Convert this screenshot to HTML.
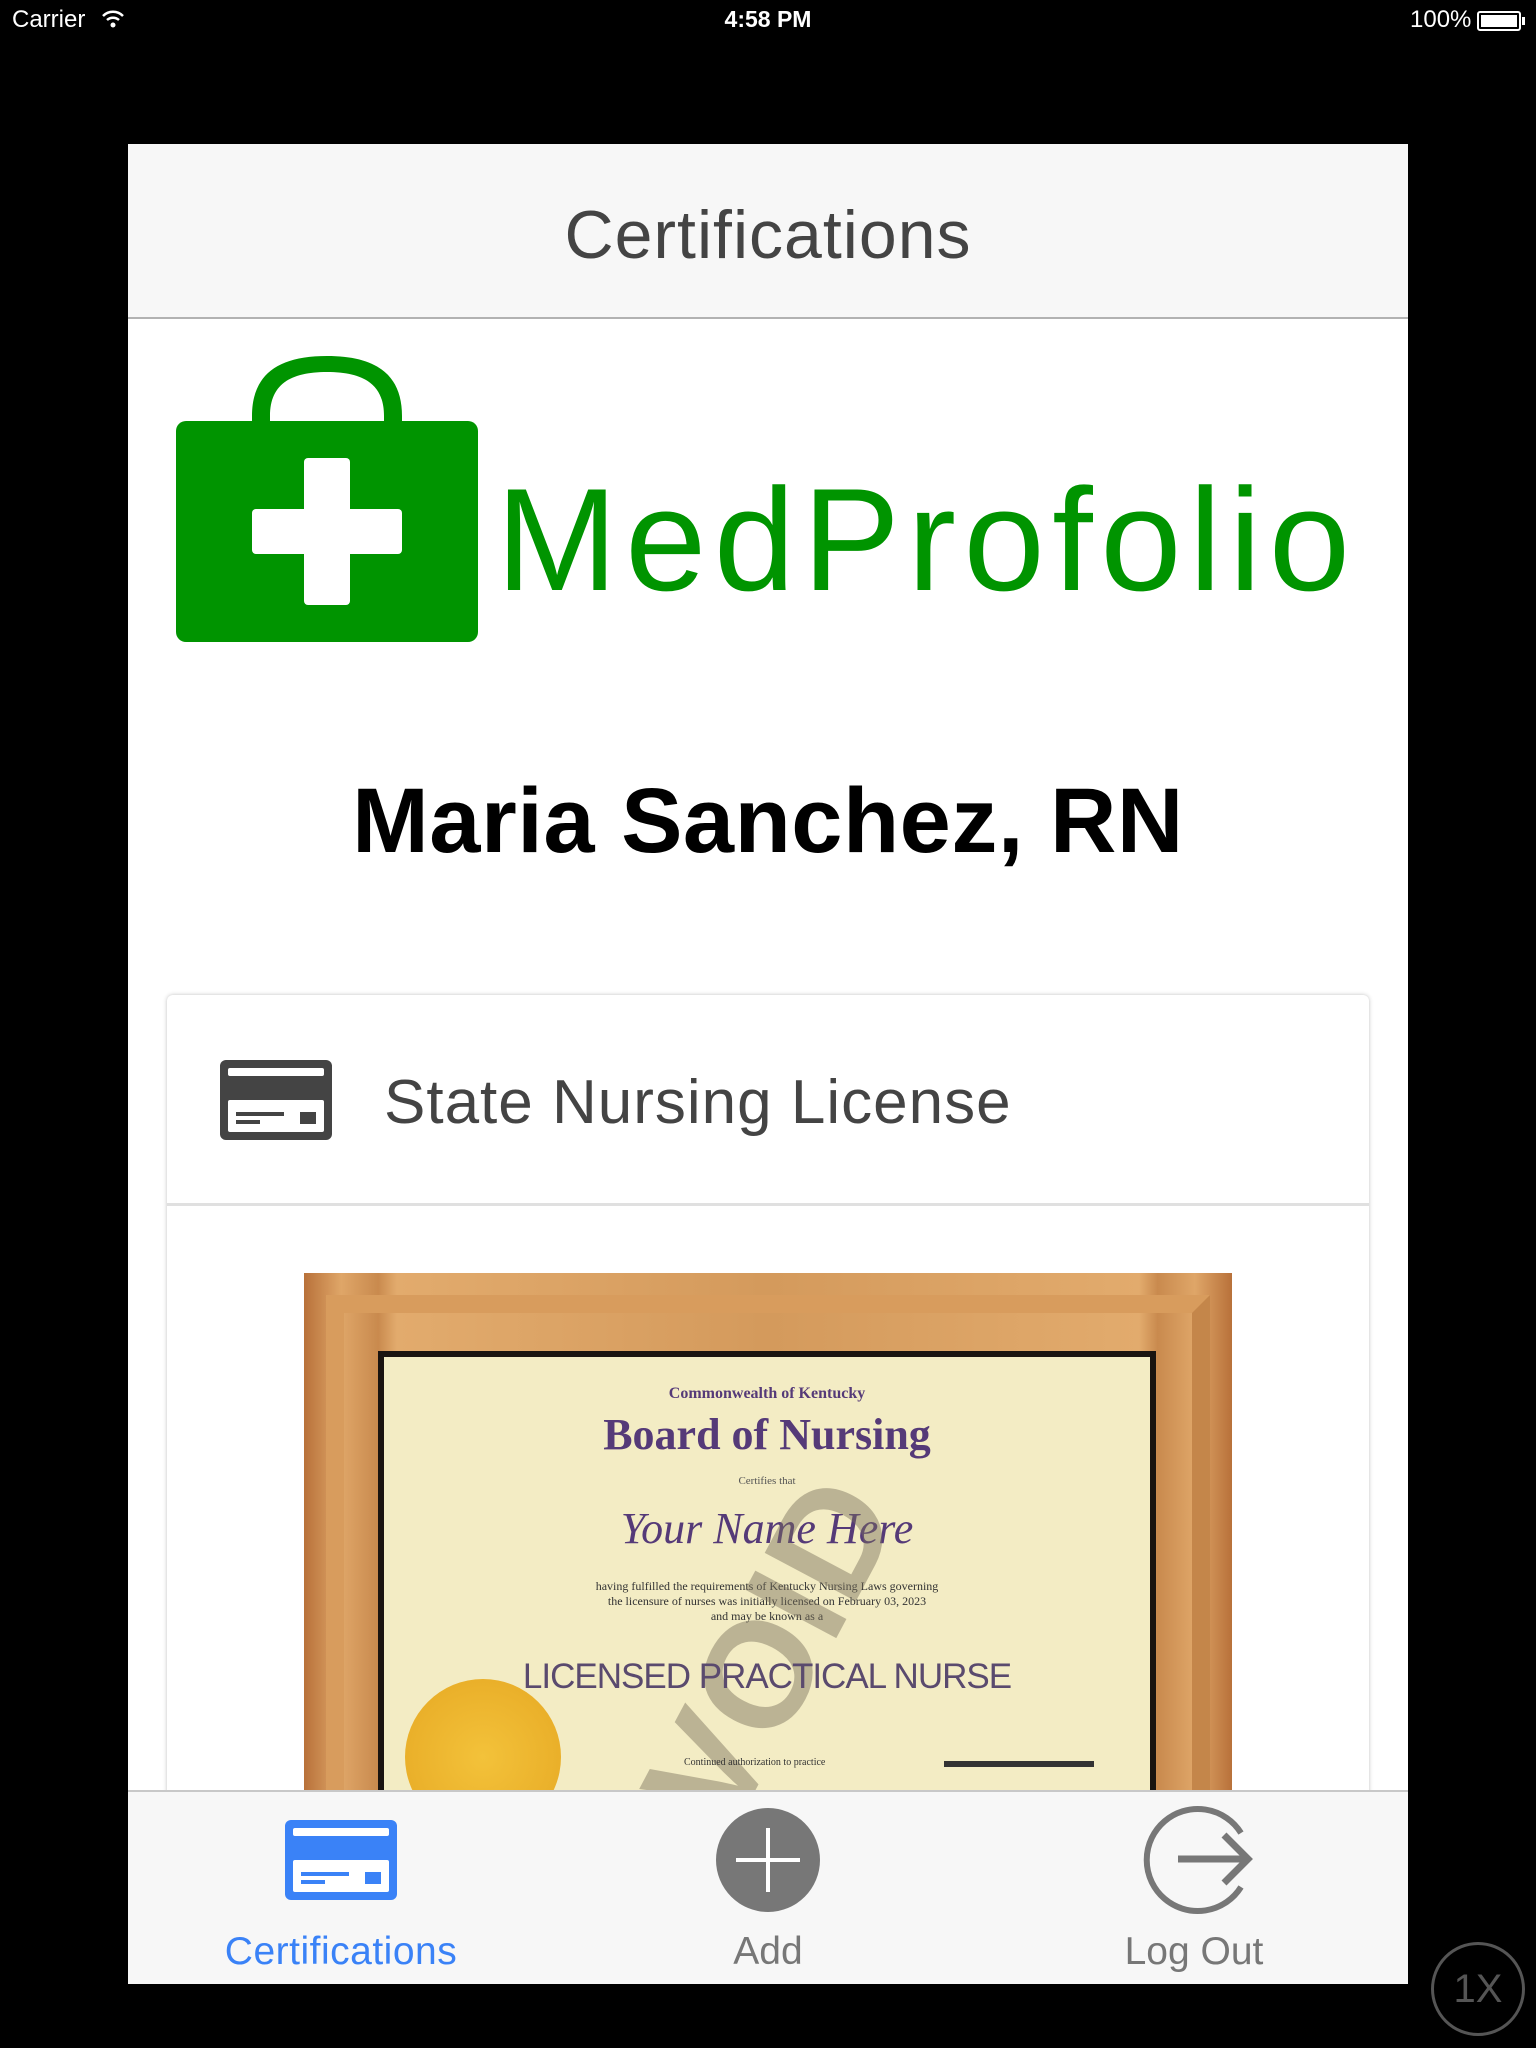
<!DOCTYPE html>
<html><head><meta charset="utf-8">
<style>
*{margin:0;padding:0;box-sizing:border-box}
body{width:1536px;height:2048px;background:#000;position:relative;overflow:hidden;font-family:"Liberation Sans",sans-serif}
.abs{position:absolute}
.sb{color:#fff;font-size:24px;top:6px}
</style></head><body>
<div class="abs sb" style="left:12px">Carrier</div>
<svg class="abs" style="left:102px;top:10px" width="22" height="18" viewBox="0 0 22 18"><path d="M1 6 A14 14 0 0 1 21 6" stroke="#fff" stroke-width="2.5" fill="none"/><path d="M5 10 A9 9 0 0 1 17 10" stroke="#fff" stroke-width="2.5" fill="none"/><circle cx="11" cy="15" r="2.5" fill="#fff"/></svg>
<div class="abs sb" style="left:0;width:1536px;text-align:center;font-weight:bold;font-size:23px">4:58 PM</div>
<div class="abs sb" style="left:1410px">100%</div>
<div class="abs" style="left:1477px;top:11px;width:44px;height:20px;border:2px solid #fff;border-radius:3px;padding:2px"><div style="width:100%;height:100%;background:#fff"></div></div>
<div class="abs" style="left:1522px;top:17px;width:3px;height:8px;background:#fff"></div>

<div class="abs" style="left:128px;top:144px;width:1280px;height:1840px;background:#fff;overflow:hidden">
  <div class="abs" style="left:0;top:0;width:1280px;height:175px;background:#f7f7f7;border-bottom:2px solid #b2b2b2"></div>
  <div class="abs" style="left:0;top:57px;width:1280px;text-align:center;font-size:68px;color:#444;letter-spacing:1px;line-height:1">Certifications</div>
</div>

<svg class="abs" style="left:176px;top:356px" width="302" height="286" viewBox="0 0 302 286">
  <path d="M76 66 V60 C76 20 100 0 151 0 C202 0 226 20 226 60 V66 H208 V60 C208 30 190 16 151 16 C112 16 94 30 94 60 V66 Z" fill="#009400"/>
  <rect x="0" y="65" width="302" height="221" rx="10" fill="#009400"/>
  <rect x="128" y="102" width="46" height="147" rx="4" fill="#fff"/>
  <rect x="76" y="153" width="150" height="45" rx="4" fill="#fff"/>
</svg>
<div class="abs" style="left:496px;top:452px;font-size:146px;color:#009400;letter-spacing:7.5px;line-height:1.2">MedProfolio</div>
<div class="abs" style="left:0;width:1536px;top:766px;text-align:center;font-size:92px;font-weight:bold;color:#000;letter-spacing:0.5px;line-height:1.2">Maria Sanchez, RN</div>

<div class="abs" style="left:167px;top:995px;width:1202px;height:900px;background:#fff;border-radius:6px;box-shadow:0 0 4px rgba(0,0,0,.25)"></div>
<div class="abs" style="left:167px;top:1203px;width:1202px;height:3px;background:#e0e0e0"></div>
<svg class="abs" style="left:220px;top:1060px" width="112" height="80" viewBox="0 0 112 80">
  <rect width="112" height="80" rx="6" fill="#444"/>
  <rect x="8" y="8" width="96" height="8" rx="2" fill="#fff"/>
  <rect x="8" y="40" width="96" height="32" rx="2" fill="#fff"/>
  <rect x="16" y="52" width="48" height="4" fill="#444"/>
  <rect x="16" y="60" width="24" height="4" fill="#444"/>
  <rect x="80" y="52" width="16" height="12" fill="#444"/>
</svg>
<div class="abs" style="left:384px;top:1066px;font-size:62px;color:#444;line-height:1.2;letter-spacing:1px">State Nursing License</div>

<div class="abs" style="left:304px;top:1273px;width:928px;height:518px;overflow:hidden;background:linear-gradient(90deg,#b8713a,#dfa668 4%,#c98a4e 8%,#e2ab6d 10%,#d49a5c 50%,#e2ab6d 90%,#c98a4e 92%,#dfa668 96%,#b8713a)">
  <div class="abs" style="left:22px;top:22px;right:22px;bottom:-40px;border:18px solid #cf9253;border-color:#d89c5d #c4864a #c4864a #d89c5d"></div>
  <div class="abs" style="left:74px;top:78px;width:778px;height:500px;background:#1a1410"></div>
  <div class="abs" style="left:80px;top:84px;width:766px;height:500px;background:#f3ecc4;font-family:'Liberation Serif',serif;color:#553a78;text-align:center;overflow:hidden">
    <div style="position:absolute;top:28px;width:100%;font-size:16px;font-weight:bold">Commonwealth of Kentucky</div>
    <div style="position:absolute;top:52px;width:100%;font-size:44px;font-weight:bold">Board of Nursing</div>
    <div style="position:absolute;top:118px;width:100%;font-size:11px;color:#555">Certifies that</div>
    <div style="position:absolute;top:146px;width:100%;font-size:44px;font-style:italic">Your Name Here</div>
    <div style="position:absolute;top:222px;width:100%;font-size:12px;color:#333;line-height:15px">having fulfilled the requirements of Kentucky Nursing Laws governing<br>the licensure of nurses was initially licensed on February 03, 2023<br>and may be known as a</div>
    <div style="position:absolute;font-family:'Liberation Sans',sans-serif;font-size:150px;font-weight:bold;color:rgba(120,110,90,.45);left:176px;top:210px;width:420px;text-align:center;line-height:170px;transform:rotate(-62deg)">VOID</div>
    <div style="position:absolute;top:300px;width:100%;font-family:'Liberation Sans',sans-serif;font-size:35px;color:#5a4a6e;letter-spacing:-1px">LICENSED PRACTICAL NURSE</div>
    <div style="position:absolute;left:21px;top:322px;width:156px;height:156px;border-radius:50%;background:radial-gradient(#f3c23a,#e6a823)"></div>
    <div style="position:absolute;top:400px;left:300px;font-size:10px;color:#333">Continued authorization to practice</div>
    <div style="position:absolute;top:404px;left:560px;width:150px;height:6px;background:#333"></div>
  </div>
</div>

<div class="abs" style="left:128px;top:1790px;width:1280px;height:194px;background:#f7f7f7;border-top:2px solid #c8c8c8"></div>
<svg class="abs" style="left:285px;top:1820px" width="112" height="80" viewBox="0 0 112 80">
  <rect width="112" height="80" rx="6" fill="#3a82f7"/>
  <rect x="8" y="8" width="96" height="8" rx="2" fill="#fff"/>
  <rect x="8" y="40" width="96" height="32" rx="2" fill="#fff"/>
  <rect x="16" y="52" width="48" height="4" fill="#3a82f7"/>
  <rect x="16" y="60" width="24" height="4" fill="#3a82f7"/>
  <rect x="80" y="52" width="16" height="12" fill="#3a82f7"/>
</svg>
<div class="abs" style="left:191px;width:300px;top:1930px;text-align:center;font-size:39px;color:#3a82f7;letter-spacing:0.5px">Certifications</div>
<svg class="abs" style="left:716px;top:1808px" width="104" height="104" viewBox="0 0 104 104"><circle cx="52" cy="52" r="52" fill="#777"/><path d="M52 20V84M20 52H84" stroke="#fff" stroke-width="4"/></svg>
<div class="abs" style="left:618px;width:300px;top:1930px;text-align:center;font-size:39px;color:#777">Add</div>
<svg class="abs" style="left:1135px;top:1800px" width="120" height="120" viewBox="0 0 120 120"><path d="M106 33 A51 51 0 1 0 106 87" stroke="#777" stroke-width="6" fill="none"/><path d="M43 59H113M89 35L113 59L89 83" stroke="#777" stroke-width="7" fill="none"/></svg>
<div class="abs" style="left:1044px;width:300px;top:1930px;text-align:center;font-size:39px;color:#777">Log Out</div>

<div class="abs" style="left:1431px;top:1942px;width:94px;height:94px;border:3px solid #555;border-radius:50%;color:#555;font-size:40px;text-align:center;line-height:88px">1X</div>
</body></html>
